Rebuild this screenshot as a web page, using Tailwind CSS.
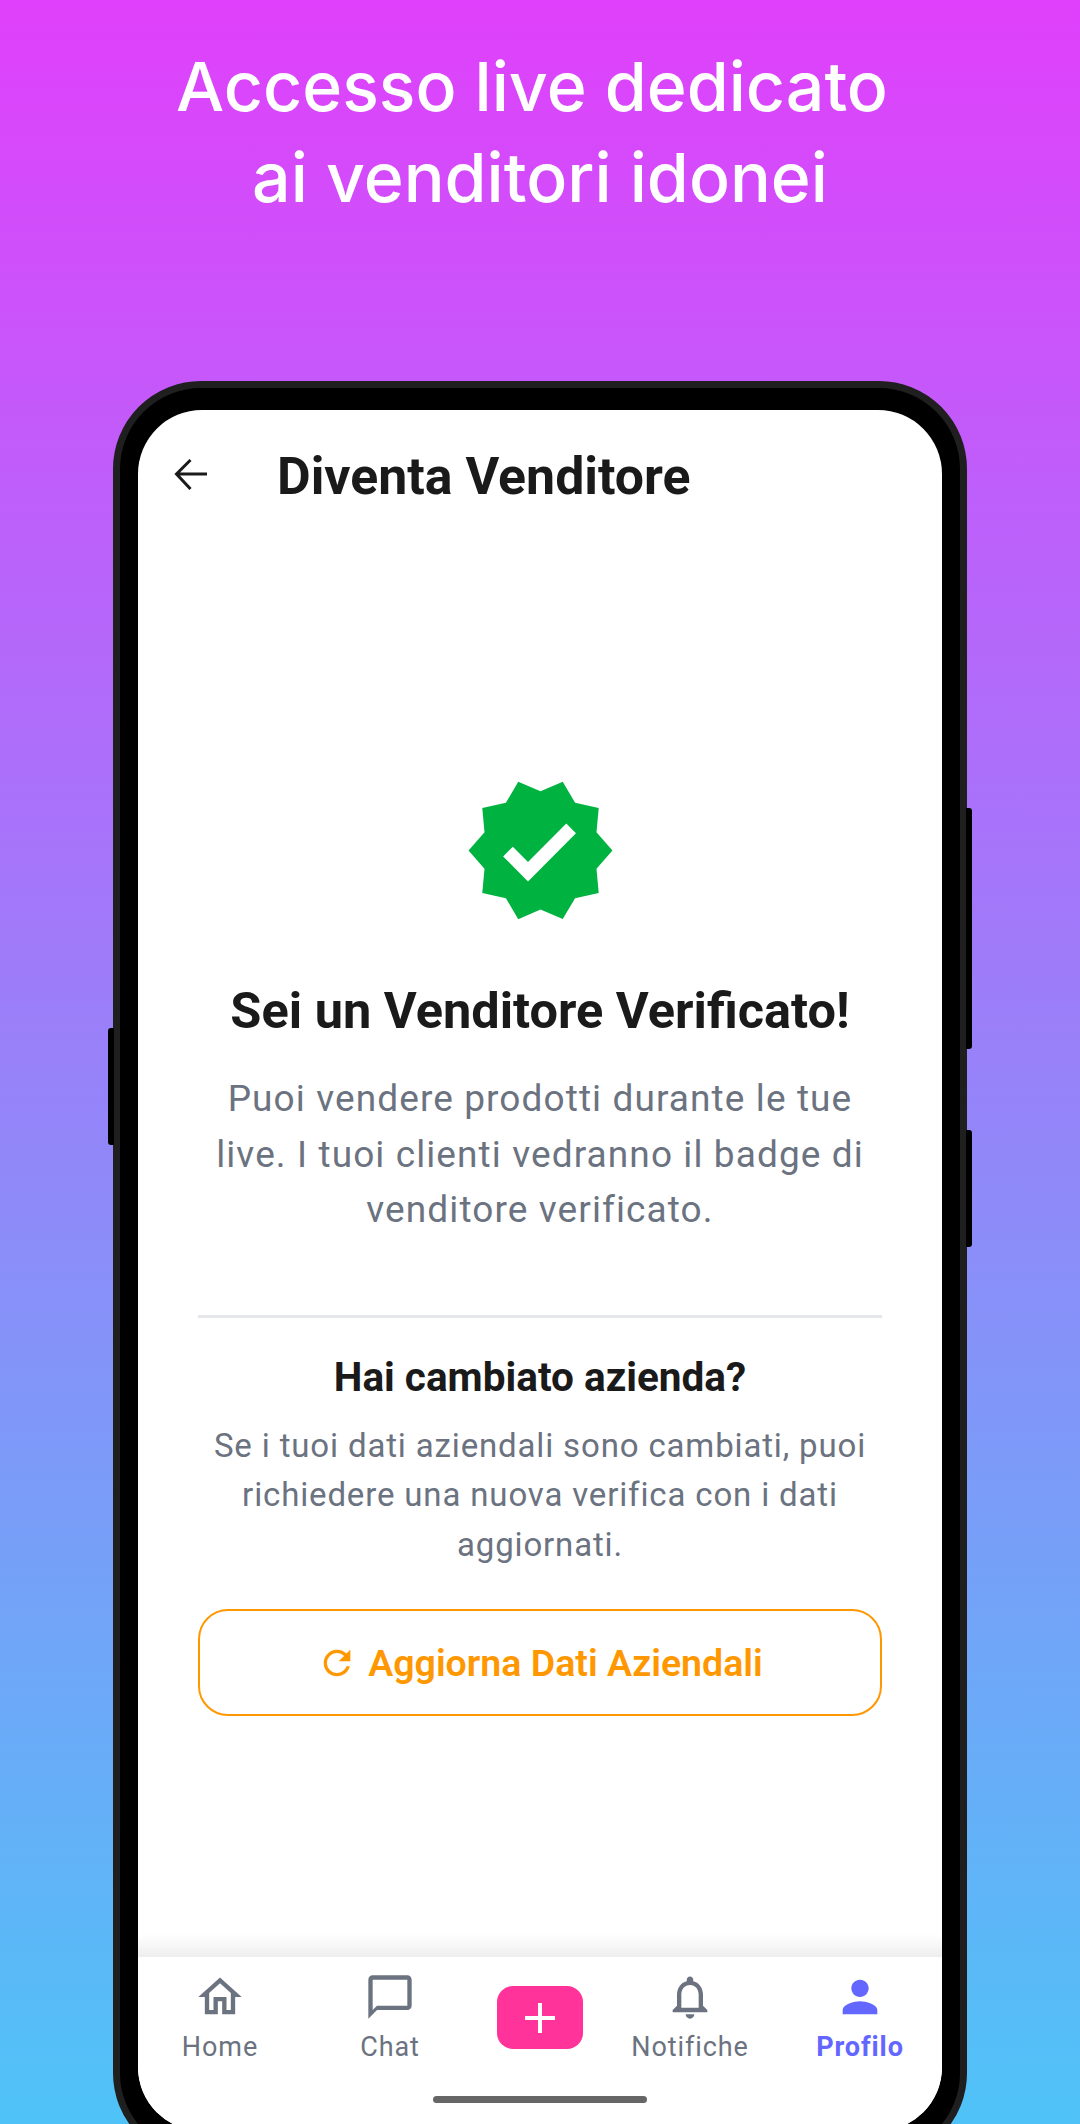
<!DOCTYPE html>
<html lang="it">
<head>
    <meta charset="UTF-8">
    <meta name="viewport" content="width=device-width, initial-scale=1.0">
    <title>Diventa Venditore</title>
    <script src="https://cdn.jsdelivr.net/npm/@tailwindcss/browser@4"></script>
</head>
<body class="h-[2124px] overflow-hidden bg-[linear-gradient(180deg,#e040fb,#4fc3f7)] font-['Roboto',sans-serif]">
    <h1 class="pt-[41px] text-center font-['Inter',sans-serif] text-[68px] font-medium leading-[91px] text-white"><span class="mr-[16px]">Accesso live dedicato</span><br>ai venditori idonei</h1>

    <!-- phone -->
    <div class="relative mx-auto mt-[158px] h-[1780px] w-[854px] rounded-[88px] border-[7px] border-[#1f1f1f] bg-black p-[22px_18px]">
        <div class="absolute left-[-12px] top-[640px] h-[117px] w-[6px] rounded-l-[3px] bg-black"></div>
        <div class="absolute right-[-12px] top-[420px] h-[241px] w-[6px] rounded-r-[3px] bg-black"></div>
        <div class="absolute right-[-12px] top-[742px] h-[117px] w-[6px] rounded-r-[3px] bg-black"></div>

        <div class="flex h-[1721px] w-[804px] flex-col overflow-hidden rounded-[64px] bg-white">
            <div class="mt-[34px] flex h-[60px] items-center">
                <svg class="ml-[36px] h-[32px] w-[34px]" viewBox="0 0 34 32" fill="none" stroke="#1a1a1a" stroke-width="3">
                    <path d="M33 16H3M16.500 2L2.500 16L16.500 31"/>
                </svg>
                <span class="ml-[69px] mt-[5px] text-[51.800px] font-bold text-[#1a1a1a]">Diventa Venditore</span>
            </div>

            <div class="flex flex-1 flex-col items-center px-[60px]">
                <svg class="mt-[268px] h-[157px] w-[157px]" viewBox="0 0 24 24" fill="#00b341">
                    <path d="M23 12l-2.440-2.790.340-3.690-3.610-.820-1.890-3.200L12 2.960 8.600 1.500 6.710 4.690 3.100 5.500l.340 3.700L1 12l2.440 2.790-.340 3.700 3.610.820L8.600 22.500l3.400-1.470 3.400 1.460 1.890-3.190 3.610-.820-.340-3.690L23 12zm-12.910 4.720l-3.800-3.810 1.480-1.480 2.320 2.330 5.850-5.870 1.480 1.480-7.330 7.350z"/>
                </svg>
                <h2 class="mt-[52px] text-[50.500px] font-bold leading-[60px] text-[#1a1a1a]">Sei un Venditore Verificato!</h2>
                <p class="mt-[30px] text-center text-[37px] leading-[55.500px] tracking-[1.1px] text-[#6b7280]">Puoi vendere prodotti durante le tue<br>live. I tuoi clienti vedranno il badge di<br>venditore verificato.</p>
                <div class="mt-[77px] h-[3px] w-full bg-[#e5e7eb]"></div>
                <h3 class="mt-[34px] text-[40.500px] font-bold leading-[50px] text-[#1a1a1a]">Hai cambiato azienda?</h3>
                <p class="mt-[19px] text-center text-[33px] leading-[49.600px] tracking-[0.85px] text-[#6b7280]">Se i tuoi dati aziendali sono cambiati, puoi<br>richiedere una nuova verifica con i dati<br>aggiornati.</p>
                <button class="mt-[40px] flex h-[107px] w-full items-center justify-center gap-[11px] rounded-[30px] border-[2.500px] border-[#ff9800] text-[37.500px] font-semibold text-[#ff9800]">
                    <svg class="h-[40px] w-[40px]" viewBox="0 0 24 24" fill="#ff9800">
                        <path d="M17.650 6.350C16.200 4.900 14.210 4 12 4c-4.420 0-7.990 3.580-7.990 8s3.570 8 7.990 8c3.730 0 6.840-2.550 7.730-6h-2.080c-.820 2.330-3.040 4-5.650 4-3.310 0-6-2.690-6-6s2.690-6 6-6c1.660 0 3.140.690 4.220 1.780L13 11h7V4l-2.350 2.350z"/>
                    </svg>
                    Aggiorna Dati Aziendali
                </button>
            </div>

            <!-- bottom nav -->
            <div class="h-[23px] bg-gradient-to-b from-white to-[#eeeeee]"></div>
            <nav class="grid h-[139px] grid-cols-[164px_176px_124px_176px_164px] items-start bg-white text-[27px] tracking-[0.9px] text-[#6b7280]">
                <div class="mt-[14px] flex flex-col items-center">
                    <svg class="h-[52px] w-[52px]" viewBox="0 0 24 24" fill="#6b7280"><path d="M12 5.690l5 4.500V18h-2v-6H9v6H7v-7.810l5-4.500M12 3L2 12h3v8h6v-6h2v6h6v-8h3L12 3z"/></svg>
                    <span class="mt-[7px] leading-[34px]">Home</span>
                </div>
                <div class="mt-[14px] flex flex-col items-center">
                    <svg class="h-[52px] w-[52px]" viewBox="0 0 24 24" fill="#6b7280"><path d="M20 2H4c-1.100 0-2 .900-2 2v18l4-4h14c1.100 0 2-.900 2-2V4c0-1.100-.900-2-2-2zm0 14H6l-2 2V4h16v12z"/></svg>
                    <span class="mt-[7px] leading-[34px]">Chat</span>
                </div>
                <div class="flex justify-center">
                    <div class="mt-[29px] flex h-[63px] w-[86px] items-center justify-center rounded-[16px] bg-[#ff3399]">
                        <svg class="h-[30px] w-[30px]" viewBox="0 0 30 30" stroke="#fff" stroke-width="4"><path d="M15 0V30M0 15H30"/></svg>
                    </div>
                </div>
                <div class="mt-[14px] flex flex-col items-center">
                    <svg class="h-[52px] w-[52px]" viewBox="0 0 24 24" fill="#6b7280"><path d="M12 22c1.100 0 2-.900 2-2h-4c0 1.100.900 2 2 2zm6-6v-5c0-3.070-1.630-5.640-4.500-6.320V4c0-.830-.670-1.500-1.500-1.500s-1.500.670-1.500 1.500v.680C7.640 5.360 6 7.920 6 11v5l-2 2v1h16v-1l-2-2zm-2 1H8v-6c0-2.480 1.510-4.500 4-4.500s4 2.020 4 4.500v6z"/></svg>
                    <span class="mt-[7px] leading-[34px]">Notifiche</span>
                </div>
                <div class="mt-[14px] flex flex-col items-center text-[#6366ff]">
                    <svg class="h-[52px] w-[52px]" viewBox="0 0 24 24" fill="#6366ff"><path d="M12 12c2.210 0 4-1.790 4-4s-1.790-4-4-4-4 1.790-4 4 1.790 4 4 4zm0 2c-2.670 0-8 1.340-8 4v2h16v-2c0-2.660-5.330-4-8-4z"/></svg>
                    <span class="mt-[7px] font-bold leading-[34px]">Profilo</span>
                </div>
            </nav>
            <div class="h-[35px] bg-white">
                <div class="mx-auto h-[7px] w-[214px] rounded-full bg-[#666666]"></div>
            </div>
        </div>
    </div>
</body>
</html>
